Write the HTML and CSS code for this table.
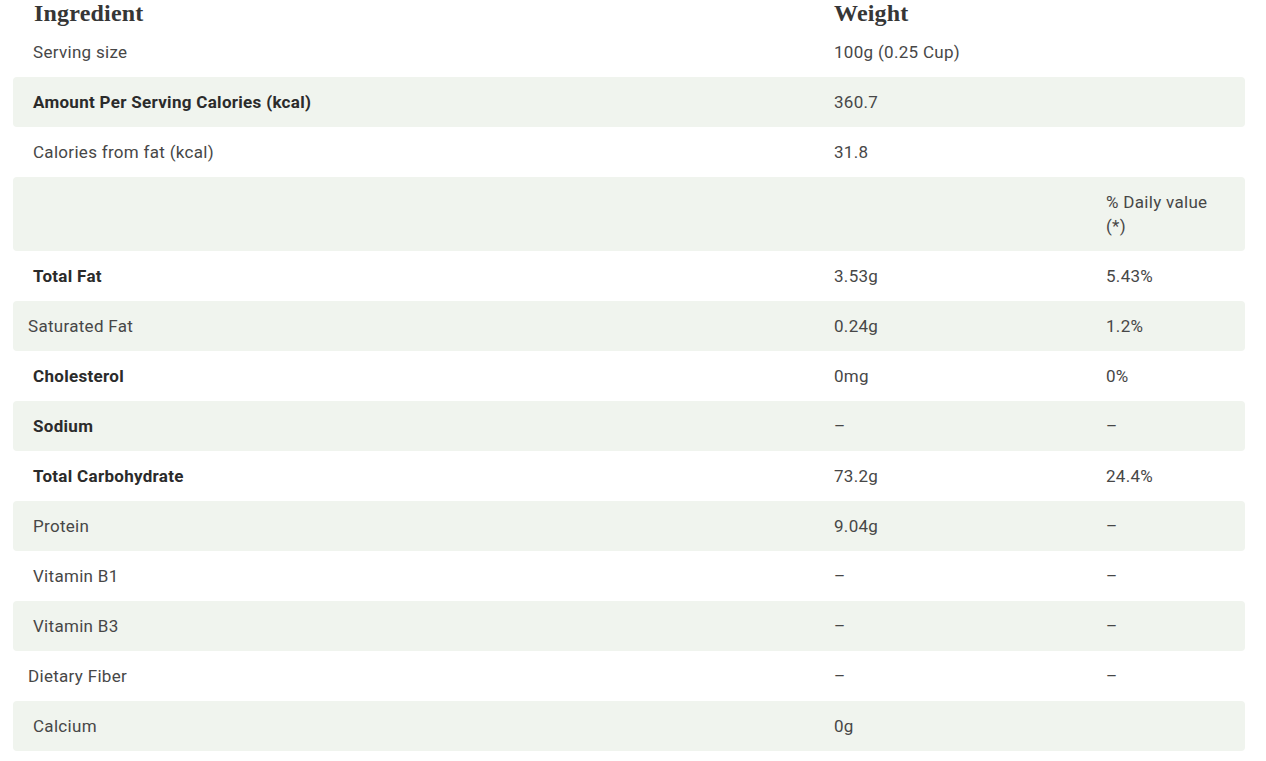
FILE: index.html
```html
<!DOCTYPE html>
<html>
<head>
<meta charset="utf-8">
<link rel="stylesheet" href="styles.css">
</head>
<body>
<div class="wrap">
<table class="nutri">
  <colgroup>
    <col class="c1"><col class="c2"><col class="c3">
  </colgroup>
  <thead>
    <tr><th>Ingredient</th><th>Weight</th><th></th></tr>
  </thead>
  <tbody>
    <tr><td>Serving size</td><td>100g (0.25 Cup)</td><td></td></tr>
    <tr class="alt"><td class="b">Amount Per Serving Calories (kcal)</td><td>360.7</td><td></td></tr>
    <tr><td>Calories from fat (kcal)</td><td>31.8</td><td></td></tr>
    <tr class="alt"><td></td><td></td><td>% Daily value (*)</td></tr>
    <tr><td class="b">Total Fat</td><td>3.53g</td><td>5.43%</td></tr>
    <tr class="alt"><td class="sub">Saturated Fat</td><td>0.24g</td><td>1.2%</td></tr>
    <tr><td class="b">Cholesterol</td><td>0mg</td><td>0%</td></tr>
    <tr class="alt"><td class="b">Sodium</td><td>–</td><td>–</td></tr>
    <tr><td class="b">Total Carbohydrate</td><td>73.2g</td><td>24.4%</td></tr>
    <tr class="alt"><td>Protein</td><td>9.04g</td><td>–</td></tr>
    <tr><td>Vitamin B1</td><td>–</td><td>–</td></tr>
    <tr class="alt"><td>Vitamin B3</td><td>–</td><td>–</td></tr>
    <tr><td class="sub">Dietary Fiber</td><td>–</td><td>–</td></tr>
    <tr class="alt"><td>Calcium</td><td>0g</td><td></td></tr>
  </tbody>
</table>
</div>
</body>
</html>
```
FILE: styles.css
```css
html, body {
  margin: 0;
  padding: 0;
  background: #ffffff;
}
.wrap {
  padding: 0 21px 0 13px;
}
.nutri {
  width: 1232px;
  border-collapse: separate;
  border-spacing: 0;
  table-layout: fixed;
  font-family: Roboto, "Liberation Sans", sans-serif;
  font-size: 17px;
  letter-spacing: 0.3px;
  color: #474747;
}
.c1 { width: 801px; }
.c2 { width: 272px; }
.c3 { width: 159px; }
.nutri th {
  font-family: "Liberation Serif", "DejaVu Serif", serif;
  font-weight: 700;
  font-size: 24px;
  letter-spacing: 0.2px;
  line-height: 27px;
  color: #363636;
  text-align: left;
  padding: 0 20px 0 21px;
}
.nutri th + th { padding-left: 20px; }
.nutri td {
  padding: 13px 20px;
  line-height: 24px;
  vertical-align: top;
  font-weight: 400;
}
.nutri td.b {
  font-weight: 700;
  color: #2b2b2b;
}
.nutri td.sub {
  padding-left: 15px;
}
.nutri tr.alt td {
  background: #f0f4ee;
}
.nutri tr.alt td:first-child {
  border-radius: 4px 0 0 4px;
}
.nutri tr.alt td:last-child {
  border-radius: 0 4px 4px 0;
}
```
